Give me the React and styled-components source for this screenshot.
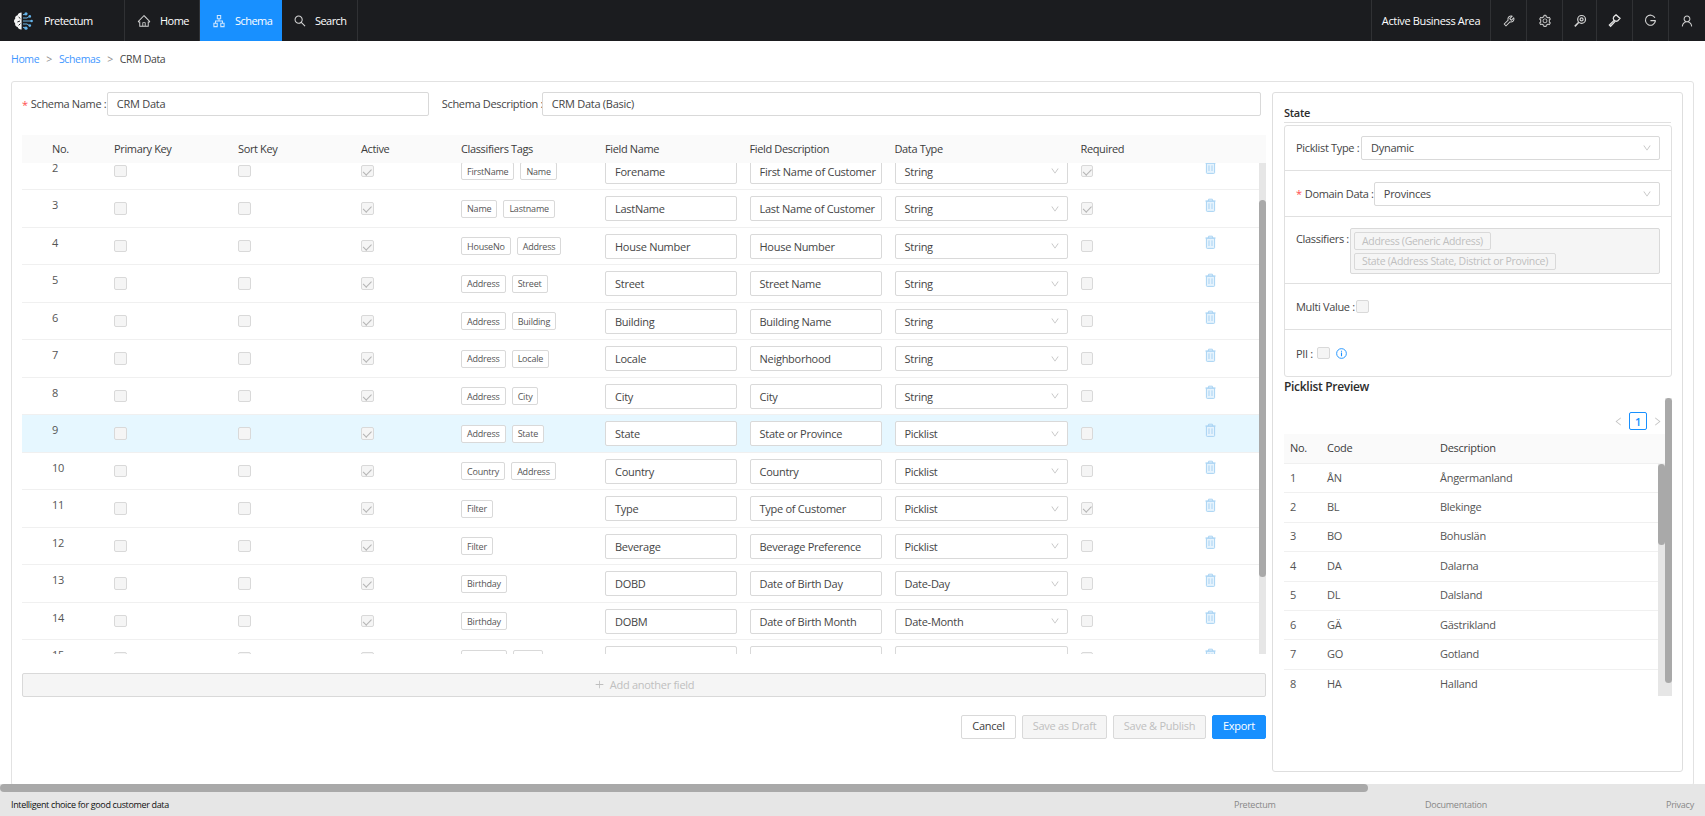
import React from 'react';
import styled, { createGlobalStyle } from 'styled-components';
import {
  AiOutlineHome, AiOutlineApartment, AiOutlineSearch, AiOutlineTool, AiOutlineSetting,
  AiOutlineUser, AiOutlineDown, AiOutlinePlus, AiOutlineLeft, AiOutlineRight,
} from 'react-icons/ai';

const FONT = '"Open Sans", "Noto Sans", "Liberation Sans", sans-serif';

const Global = createGlobalStyle`
  html, body { margin: 0; padding: 0; background: #fff; overflow: hidden; }
  body { font-family: ${FONT}; font-size: 11px; letter-spacing: -0.27px; color: #404040; }
  * { box-sizing: border-box; }
`;

const Page = styled.div`
  position: relative;
  width: 1705px;
  height: 816px;
  overflow: hidden;
`;

/* ---------- top bar ---------- */
const TopBar = styled.header`
  display: flex;
  height: 41px;
  background: #1b1c1f;
  color: #fff;
`;
const NavItem = styled.div`
  display: flex;
  align-items: center;
  justify-content: ${p => (p.$center ? 'center' : 'flex-start')};
  width: ${p => p.$w}px;
  padding-left: ${p => p.$pl || 0}px;
  gap: ${p => p.$gap || 0}px;
  background: ${p => (p.$active ? '#1890ff' : 'transparent')};
  border-right: ${p => (p.$active ? '0' : '1px solid #303134')};
  font-size: 11px;
  letter-spacing: ${p => (p.$center ? '-0.35px' : '-0.55px')};
  color: #fff;
  flex: none;
  svg { flex: none; }
`;
const NavIcon = styled.span`
  display: flex;
  color: ${p => p.$color || '#d4d4d4'};
  font-size: 14px;
`;
const Spacer = styled.div`
  flex: 1;
  border-right: 1px solid #303134;
`;
const RightIcon = styled.div`
  display: flex;
  align-items: center;
  justify-content: center;
  flex: none;
  width: ${p => p.$w}px;
  color: #cfcfcf;
  font-size: 14px;
  border-right: ${p => (p.$last ? '0' : '1px solid #303134')};
`;

/* ---------- breadcrumb ---------- */
const Crumbs = styled.nav`
  display: flex;
  align-items: center;
  height: 35px;
  padding-left: 11px;
  font-size: 10.5px;
  letter-spacing: -0.35px;
`;
const Crumb = styled.span`
  color: ${p => (p.$link ? '#3f97ff' : '#454545')};
`;
const CrumbSep = styled.span`
  color: #8c8c8c;
  margin: 0 7px;
`;

/* ---------- main card ---------- */
const Card = styled.main`
  position: absolute;
  top: 81px;
  left: 11px;
  width: 1683px;
  height: 705px;
  border: 1px solid #e2e2e2;
  border-radius: 3px;
  background: #fff;
  display: flex;
  align-items: flex-start;
`;
const LeftCol = styled.section`
  width: 1244px;
  margin: 10px 0 0 10px;
  flex: none;
`;
const FormRow = styled.div`
  display: flex;
  align-items: center;
  height: 24px;
  margin-bottom: 19px;
`;
const Required = styled.span`
  color: #ff4d4f;
  margin-right: 3px;
  font-size: 11px;
`;
const Label = styled.label`
  color: #454545;
  white-space: nowrap;
  font-size: 11px;
  letter-spacing: -0.33px;
  width: ${p => (p.$w ? `${p.$w}px` : 'auto')};
  margin-left: ${p => p.$ml || 0}px;
  margin-top: ${p => p.$mt || 0}px;
  padding-bottom: ${p => p.$pb || 0}px;
  flex: none;
`;
const TextBox = styled.div`
  display: flex;
  align-items: center;
  height: ${p => p.$h || 25}px;
  width: ${p => p.$w}px;
  padding-left: 9px;
  padding-bottom: ${p => p.$pb || 0}px;
  border: 1px solid #d9d9d9;
  border-radius: 2px;
  background: #fff;
  color: #454545;
  font-size: 11px;
  white-space: nowrap;
  overflow: hidden;
  flex: none;
`;
const TableHead = styled.div`
  display: grid;
  grid-template-columns: 92px 124px 123px 100px 144px 144.5px 145px 186px 124px 54.5px;
  align-items: center;
  height: 28px;
  width: 1244px;
  padding-bottom: 2px;
  background: #fafafa;
  font-size: 11px;
  letter-spacing: -0.36px;
  color: #3c3c3c;
`;
const HeadNo = styled.span`
  padding-left: 30px;
`;
const TableBody = styled.div`
  position: relative;
  height: 491px;
  width: 1244px;
  overflow: hidden;
`;
const Rows = styled.div`
  margin-top: -10.2px;
  width: 1237px;
`;
const Row = styled.div`
  display: grid;
  grid-template-columns: 92px 124px 123px 100px 144px 144.5px 145px 186px 124px 1fr;
  align-items: center;
  height: 37.5px;
  border-bottom: 1px solid #f0f0f0;
  background: ${p => (p.$selected ? '#e6f7ff' : '#fff')};
`;
const NoCell = styled.span`
  padding-left: 30px;
  margin-top: -8px;
  color: #555;
  font-size: 11px;
`;
const Check = styled.span`
  display: block;
  position: relative;
  width: 12.5px;
  height: 12.5px;
  border: 1px solid #d9d9d9;
  border-radius: 2px;
  background: #f5f5f5;
  ${p => p.$on && `
    &::after {
      content: '';
      position: absolute;
      left: 3.4px;
      top: 1px;
      width: 3.6px;
      height: 6.6px;
      border: solid #b5b5b5;
      border-width: 0 1.3px 1.3px 0;
      transform: rotate(45deg);
    }
  `}
`;
const Tags = styled.div`
  display: flex;
  gap: 6px;
`;
const Tag = styled.span`
  display: flex;
  align-items: center;
  height: 18px;
  padding: 0 5px;
  border: 1px solid #d9d9d9;
  border-radius: 2px;
  background: #fff;
  font-size: 9px;
  letter-spacing: -0.2px;
  color: #555;
  white-space: nowrap;
`;
const SelectBox = styled(TextBox)`
  position: relative;
  svg {
    position: absolute;
    right: 7px;
    top: 50%;
    margin-top: -5px;
    font-size: 10px;
    color: #bfbfbf;
  }
`;
const TrashIcon = styled.svg`
  display: block;
  width: 11px;
  height: 14px;
  margin-top: -8px;
`;
const ScrollTrack = styled.div`
  position: absolute;
  top: ${p => p.$top || 0}px;
  right: ${p => p.$right || 0}px;
  width: 7px;
  height: ${p => p.$h}px;
  background: #e6e6e6;
`;
const ScrollThumb = styled.div`
  position: absolute;
  top: ${p => p.$top}px;
  left: 0;
  width: 7px;
  height: ${p => p.$h}px;
  border-radius: 4px;
  background: #a9a9a9;
`;
const AddField = styled.div`
  display: flex;
  align-items: center;
  justify-content: center;
  gap: 5px;
  height: 24px;
  margin-top: 19px;
  padding-bottom: 1px;
  border: 1px solid #d9d9d9;
  border-radius: 2px;
  background: #f5f5f5;
  color: #bfbfbf;
  font-size: 11px;
`;
const Actions = styled.div`
  display: flex;
  justify-content: flex-end;
  gap: 6px;
  margin-top: 18px;
`;
const Btn = styled.button`
  height: 24px;
  width: ${p => p.$w}px;
  padding: 0 0 3px;
  font-family: inherit;
  letter-spacing: inherit;
  font-size: 11px;
  border-radius: 2px;
  border: 1px solid ${p => (p.$primary ? '#1890ff' : '#d9d9d9')};
  background: ${p => (p.$primary ? '#1890ff' : p.$disabled ? '#f5f5f5' : '#fff')};
  color: ${p => (p.$primary ? '#fff' : p.$disabled ? '#bfbfbf' : '#404040')};
`;

/* ---------- right panel ---------- */
const Panel = styled.aside`
  width: 411px;
  height: 680px;
  margin: 10px 0 0 6px;
  padding: 0 11px;
  border: 1px solid #dedede;
  border-radius: 3px;
  flex: none;
`;
const PanelTitle = styled.div`
  display: flex;
  align-items: flex-end;
  height: 30px;
  padding-bottom: 2px;
  border-bottom: 1px solid #e0e0e0;
  margin-bottom: 2px;
  font-size: 11px;
  font-weight: 600;
  color: #2c2c2c;
`;
const PropBox = styled.div`
  width: 388px;
  border: 1px solid #e0e0e0;
  border-radius: 3px;
`;
const PropRow = styled.div`
  display: flex;
  align-items: ${p => (p.$top ? 'flex-start' : 'center')};
  height: ${p => p.$h}px;
  padding: ${p => (p.$top ? '11px' : '0')} 11px 0 11px;
  border-bottom: ${p => (p.$last ? '0' : '1px solid #e0e0e0')};
  gap: ${p => p.$gap || 0}px;
`;
const ClassBox = styled.div`
  width: 310px;
  height: 46px;
  padding: 3px;
  border: 1px solid #d9d9d9;
  border-radius: 2px;
  background: #f5f5f5;
  display: flex;
  flex-direction: column;
  align-items: flex-start;
  gap: 3px;
`;
const ClassTag = styled.span`
  display: flex;
  align-items: center;
  height: 18px;
  padding: 0 7px;
  border: 1px solid #d9d9d9;
  border-radius: 2px;
  font-size: 10.5px;
  letter-spacing: -0.32px;
  color: #bfbfbf;
  white-space: nowrap;
`;
const InfoIcon = styled.svg`
  width: 11px;
  height: 11px;
  margin-left: 1px;
`;
const PreviewTitle = styled.div`
  display: flex;
  align-items: center;
  height: 20px;
  margin-top: -1px;
  font-size: 12px;
  font-weight: 600;
  letter-spacing: -0.3px;
  color: #2c2c2c;
`;
const PreviewArea = styled.div`
  position: relative;
  width: 388px;
  height: 298px;
  margin-top: 2px;
`;
const Pager = styled.div`
  position: absolute;
  top: 14px;
  left: 329px;
  display: flex;
  align-items: center;
  gap: 5px;
  color: #c4c4c4;
  font-size: 11px;
`;
const PageNo = styled.span`
  display: flex;
  align-items: center;
  justify-content: center;
  width: 18px;
  height: 18px;
  border: 1px solid #1890ff;
  border-radius: 2px;
  color: #1890ff;
  font-size: 11px;
  font-weight: 600;
`;
const PickHead = styled.div`
  position: absolute;
  top: 36px;
  left: 0;
  display: grid;
  grid-template-columns: 37px 113px 1fr;
  align-items: center;
  width: 381px;
  height: 30px;
  padding: 0 0 2px 6px;
  background: #fafafa;
  border-bottom: 1px solid #f0f0f0;
  font-size: 11px;
  color: #3c3c3c;
`;
const PickBody = styled.div`
  position: absolute;
  top: 66px;
  left: 0;
  width: 374px;
`;
const PickRow = styled.div`
  display: grid;
  grid-template-columns: 37px 113px 1fr;
  align-items: center;
  height: 29.4px;
  padding: 0 0 2px 6px;
  border-bottom: ${p => (p.$last ? '0' : '1px solid #f0f0f0')};
  font-size: 11px;
  color: #555;
`;

/* ---------- bottom ---------- */
const HScroll = styled.div`
  position: absolute;
  left: 0;
  top: 784px;
  width: 1705px;
  height: 8px;
  background: #e6e6e6;
`;
const HThumb = styled.div`
  width: 1368px;
  height: 8px;
  border-radius: 4px;
  background: #a9a9a9;
`;
const Footer = styled.footer`
  position: absolute;
  left: 0;
  top: 792px;
  width: 1705px;
  height: 24px;
  background: #e6e6e6;
  display: grid;
  grid-template-columns: 1223px 191px 241px 1fr;
  align-items: center;
  padding-left: 11px;
  font-size: 9px;
  letter-spacing: -0.25px;
  color: #888;
`;
const Tagline = styled.span`
  color: #111;
  font-size: 9px;
  letter-spacing: -0.35px;
`;

const LogoSvg = () => (
  <svg width="22" height="22" viewBox="0 0 22 22" aria-hidden="true">
    <path d="M9.6 2.6 C7.6 2.6 6 3.6 5.6 5.2 C3.8 5.6 2.8 7 3.2 8.8 C1.6 10 1.6 12.2 3.2 13.4 C2.8 15.2 3.8 16.6 5.6 17 C6 18.6 7.6 19.6 9.6 19.4 Z" fill="#f4f4f4" />
    <path d="M6.6 7 L8.4 8.6 M5.4 12 L8 11 M6.6 15.4 L8.4 13.6" stroke="#1b1c1f" strokeWidth="1" />
    <g stroke="#6fb6e6" strokeWidth="1" fill="none">
      <path d="M11 4.6 L13.4 4.6 M11 8 L15 8 L17 6.6 M11 11 L19 11 M11 14 L15 14 L17 15.4 M11 17.4 L13.4 17.4" />
    </g>
    <g fill="#63b3ea">
      <circle cx="14" cy="3.8" r="1.6" /><circle cx="17.8" cy="6.4" r="1.3" /><circle cx="19.6" cy="11" r="1.3" />
      <circle cx="17.8" cy="15.6" r="1.3" /><circle cx="14" cy="18.2" r="1.6" />
    </g>
  </svg>
);
const ZoomKeyIcon = () => (
  <svg width="14" height="14" viewBox="0 0 14 14" fill="none" stroke="#d6d6d6" strokeWidth="1.2" aria-hidden="true">
    <circle cx="8.6" cy="5.4" r="3.9" />
    <circle cx="8.6" cy="5.4" r="1.5" />
    <path d="M5.8 8.2 L1.8 12.4" strokeWidth="1.6" />
  </svg>
);
const HammerIcon = () => (
  <svg width="15" height="15" viewBox="0 0 15 15" fill="none" stroke="#e4e4e4" strokeWidth="1.3" aria-hidden="true">
    <path d="M9 1.8 L13 5.4 L10.6 8 C9.4 8.4 7.6 8 6.8 7 C6.2 6 6.2 4.6 6.8 3.8 Z" />
    <path d="M7.2 7.4 L2.4 12 L3.6 13.2 L8.2 8.4" />
  </svg>
);
const PowerGIcon = () => (
  <svg width="13" height="13" viewBox="0 0 15 15" fill="none" stroke="#d6d6d6" strokeWidth="1.3" aria-hidden="true">
    <path d="M12.6 4.4 A5.8 5.8 0 1 0 13.2 8 M7.4 7.6 L13.6 7.6" />
  </svg>
);
const Trash = () => (
  <TrashIcon viewBox="0 0 11 14" aria-hidden="true">
    <path d="M1.4 3.2 H9.6 V12.6 Q9.6 13.4 8.8 13.4 H2.2 Q1.4 13.4 1.4 12.6 Z" fill="#e6f3fd" stroke="#a8d3f3" />
    <path d="M0.4 3 H10.6 M3.6 3 V1.2 H7.4 V3" fill="none" stroke="#a8d3f3" />
    <path d="M4 5.4 V11 M7 5.4 V11" stroke="#a8d3f3" fill="none" />
  </TrashIcon>
);

const rows = [
  { n: 2, tags: ['FirstName', 'Name'], name: 'Forename', desc: 'First Name of Customer', type: 'String', req: true },
  { n: 3, tags: ['Name', 'Lastname'], name: 'LastName', desc: 'Last Name of Customer', type: 'String', req: true },
  { n: 4, tags: ['HouseNo', 'Address'], name: 'House Number', desc: 'House Number', type: 'String' },
  { n: 5, tags: ['Address', 'Street'], name: 'Street', desc: 'Street Name', type: 'String' },
  { n: 6, tags: ['Address', 'Building'], name: 'Building', desc: 'Building Name', type: 'String' },
  { n: 7, tags: ['Address', 'Locale'], name: 'Locale', desc: 'Neighborhood', type: 'String' },
  { n: 8, tags: ['Address', 'City'], name: 'City', desc: 'City', type: 'String' },
  { n: 9, tags: ['Address', 'State'], name: 'State', desc: 'State or Province', type: 'Picklist', selected: true },
  { n: 10, tags: ['Country', 'Address'], name: 'Country', desc: 'Country', type: 'Picklist' },
  { n: 11, tags: ['Filter'], name: 'Type', desc: 'Type of Customer', type: 'Picklist', req: true },
  { n: 12, tags: ['Filter'], name: 'Beverage', desc: 'Beverage Preference', type: 'Picklist' },
  { n: 13, tags: ['Birthday'], name: 'DOBD', desc: 'Date of Birth Day', type: 'Date-Day' },
  { n: 14, tags: ['Birthday'], name: 'DOBM', desc: 'Date of Birth Month', type: 'Date-Month' },
  { n: 15, tags: ['Birthday', 'Year'], name: 'DOBY', desc: 'Date of Birth Year', type: 'Date-Year' },
];

const picks = [
  ['ÅN', 'Ångermanland'], ['BL', 'Blekinge'], ['BO', 'Bohuslän'], ['DA', 'Dalarna'],
  ['DL', 'Dalsland'], ['GÄ', 'Gästrikland'], ['GO', 'Gotland'], ['HA', 'Halland'],
];

export default function App() {
  return (
    <Page>
      <Global />
      <TopBar>
        <NavItem $w={125} $pl={12} $gap={10}><LogoSvg />Pretectum</NavItem>
        <NavItem $w={75} $pl={12} $gap={9}><NavIcon><AiOutlineHome /></NavIcon>Home</NavItem>
        <NavItem $w={82} $pl={12} $gap={9} $active><NavIcon $color="#cfe6ff"><AiOutlineApartment /></NavIcon>Schema</NavItem>
        <NavItem $w={76} $pl={11} $gap={8}><NavIcon><AiOutlineSearch /></NavIcon>Search</NavItem>
        <Spacer />
        <NavItem $w={119} $center>Active Business Area</NavItem>
        <RightIcon $w={36}><AiOutlineTool /></RightIcon>
        <RightIcon $w={36}><AiOutlineSetting /></RightIcon>
        <RightIcon $w={34}><ZoomKeyIcon /></RightIcon>
        <RightIcon $w={36}><HammerIcon /></RightIcon>
        <RightIcon $w={36}><PowerGIcon /></RightIcon>
        <RightIcon $w={36} $last><AiOutlineUser /></RightIcon>
      </TopBar>
      <Crumbs>
        <Crumb $link>Home</Crumb><CrumbSep>&gt;</CrumbSep>
        <Crumb $link>Schemas</Crumb><CrumbSep>&gt;</CrumbSep>
        <Crumb>CRM Data</Crumb>
      </Crumbs>
      <Card>
        <LeftCol>
          <FormRow>
            <Required>*</Required>
            <Label $w={76} $pb={2}>Schema Name :</Label>
            <TextBox $w={322} $h={24} $pb={2}>CRM Data</TextBox>
            <Label $w={100} $ml={13} $pb={2}>Schema Description :</Label>
            <TextBox $w={719} $h={24} $pb={2}>CRM Data (Basic)</TextBox>
          </FormRow>
          <TableHead>
            <HeadNo>No.</HeadNo>
            <span>Primary Key</span>
            <span>Sort Key</span>
            <span>Active</span>
            <span>Classifiers Tags</span>
            <span>Field Name</span>
            <span>Field Description</span>
            <span>Data Type</span>
            <span>Required</span>
            <span />
          </TableHead>
          <TableBody>
            <Rows>
              {rows.map(r => (
                <Row key={r.n} $selected={r.selected}>
                  <NoCell>{r.n}</NoCell>
                  <Check />
                  <Check />
                  <Check $on />
                  <Tags>{r.tags.map(t => <Tag key={t}>{t}</Tag>)}</Tags>
                  <TextBox $w={132}>{r.name}</TextBox>
                  <TextBox $w={132}>{r.desc}</TextBox>
                  <SelectBox $w={173}>{r.type}<AiOutlineDown /></SelectBox>
                  <Check $on={r.req} />
                  <Trash />
                </Row>
              ))}
            </Rows>
            <ScrollTrack $h={491}><ScrollThumb $top={37} $h={377} /></ScrollTrack>
          </TableBody>
          <AddField><AiOutlinePlus />Add another field</AddField>
          <Actions>
            <Btn $w={55}>Cancel</Btn>
            <Btn $w={85} $disabled>Save as Draft</Btn>
            <Btn $w={93} $disabled>Save &amp; Publish</Btn>
            <Btn $w={54} $primary>Export</Btn>
          </Actions>
        </LeftCol>
        <Panel>
          <PanelTitle>State</PanelTitle>
          <PropBox>
            <PropRow $h={45} $gap={5}>
              <Label $w={60} $pb={2}>Picklist Type :</Label>
              <SelectBox $w={299} $h={24} $pb={2}>Dynamic<AiOutlineDown /></SelectBox>
            </PropRow>
            <PropRow $h={46}>
              <Required>*</Required>
              <Label $w={69}>Domain Data :</Label>
              <SelectBox $w={286} $h={24}>Provinces<AiOutlineDown /></SelectBox>
            </PropRow>
            <PropRow $h={67} $top $gap={5}>
              <Label $w={49} $mt={3}>Classifiers :</Label>
              <ClassBox>
                <ClassTag>Address (Generic Address)</ClassTag>
                <ClassTag>State (Address State, District or Province)</ClassTag>
              </ClassBox>
            </PropRow>
            <PropRow $h={46} $gap={5}>
              <Label $w={55}>Multi Value :</Label>
              <Check />
            </PropRow>
            <PropRow $h={46} $last $gap={5}>
              <Label $w={16}>PII :</Label>
              <Check />
              <InfoIcon viewBox="0 0 12 12" fill="none" stroke="#1890ff">
                <circle cx="6" cy="6" r="5.3" />
                <path d="M6 5 V9 M6 3 V4" strokeWidth="1.2" />
              </InfoIcon>
            </PropRow>
          </PropBox>
          <PreviewTitle>Picklist Preview</PreviewTitle>
          <PreviewArea>
            <Pager>
              <AiOutlineLeft />
              <PageNo>1</PageNo>
              <AiOutlineRight />
            </Pager>
            <PickHead><span>No.</span><span>Code</span><span>Description</span></PickHead>
            <PickBody>
              {picks.map((p, i) => (
                <PickRow key={p[0]} $last={i === picks.length - 1}>
                  <span>{i + 1}</span><span>{p[0]}</span><span>{p[1]}</span>
                </PickRow>
              ))}
            </PickBody>
            <ScrollTrack $top={66} $right={7} $h={232}><ScrollThumb $top={0} $h={81} /></ScrollTrack>
            <ScrollTrack $h={298}><ScrollThumb $top={0} $h={285} /></ScrollTrack>
          </PreviewArea>
        </Panel>
      </Card>
      <HScroll><HThumb /></HScroll>
      <Footer>
        <Tagline>Intelligent choice for good customer data</Tagline>
        <span>Pretectum</span>
        <span>Documentation</span>
        <span>Privacy</span>
      </Footer>
    </Page>
  );
}
